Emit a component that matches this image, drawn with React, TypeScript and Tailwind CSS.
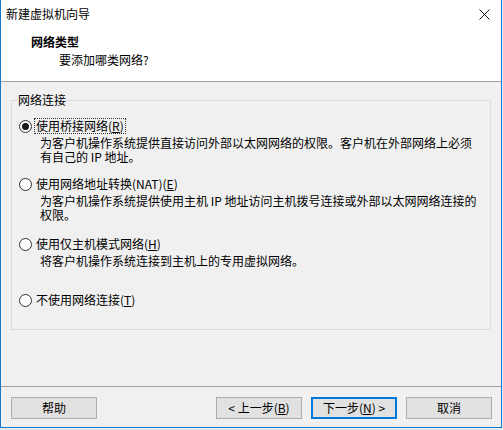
import React from "react";

const font = { fontFamily: '"Noto Sans CJK SC", "Noto Sans", sans-serif' };

function Radio({ checked }: { checked?: boolean }) {
  return (
    <span className="w-[13px] h-[13px] rounded-full border border-[#333333] bg-white flex items-center justify-center shrink-0">
      {checked && <span className="w-[7px] h-[7px] rounded-full bg-[#1a1a1a]" />}
    </span>
  );
}

function Option({
  label,
  keyChar,
  checked,
  lines,
  className,
}: {
  label: string;
  keyChar: string;
  checked?: boolean;
  lines: string[];
  className: string;
}) {
  return (
    <div className={className}>
      <div className="flex items-center h-[14px]">
        <Radio checked={checked} />
        <span
          className={
            "ml-[3px] px-[1px] leading-[14px] " +
            (checked ? "outline outline-1 outline-dotted outline-[#333]" : "")
          }
        >
          {label}(<span className="underline">{keyChar}</span>)
        </span>
      </div>
      {lines.length > 0 && (
        <div className="ml-[21px] mt-[3px] leading-[14px]">
          {lines.map((l, i) => (
            <div key={i}>{l}</div>
          ))}
        </div>
      )}
    </div>
  );
}

function Btn({ children, focused }: { children: React.ReactNode; focused?: boolean }) {
  return (
    <button
      className={
        "w-[86px] h-[22px] bg-[#e1e1e1] text-[12px] leading-none text-black flex items-center justify-center " +
        (focused ? "border-2 border-[#0078d7]" : "border border-[#adadad]")
      }
    >
      {children}
    </button>
  );
}

export default function App() {
  return (
    <div className="w-[503px] h-[430px] bg-[#e8ecf0] text-[12px] text-black" style={font}>
      <div className="w-[502px] h-[428px] border-l border-r border-b border-[#1979ca] bg-[#f0f0f0] flex flex-col">
        <div className="bg-white h-[81px] flex flex-col">
          <div className="h-[28px] flex items-center justify-between pl-[5px] pr-[11px]">
            <span className="leading-[14px]">新建虚拟机向导</span>
            <svg width="11" height="11" viewBox="0 0 11 11">
              <path d="M0.5 0.5 L10.5 10.5 M10.5 0.5 L0.5 10.5" stroke="#111" strokeWidth="1" />
            </svg>
          </div>
          <div className="pl-[30px] mt-[7px] font-bold leading-[14px]">网络类型</div>
          <div className="pl-[58px] mt-[4px] leading-[14px]">要添加哪类网络?</div>
        </div>
        <div className="h-px bg-[#a0a0a0]" />
        <div className="flex-1 px-[10px]">
          <fieldset className="mt-[11px] w-[480px] h-[237px] border border-[#dcdcdc] px-[6px]">
            <legend className="leading-[14px] px-0">网络连接</legend>
            <Option
              className="mt-[12px] ml-[1px]"
              label="使用桥接网络"
              keyChar="R"
              checked
              lines={[
                "为客户机操作系统提供直接访问外部以太网网络的权限。客户机在外部网络上必须",
                "有自己的 IP 地址。",
              ]}
            />
            <Option
              className="mt-[13px] ml-[1px]"
              label="使用网络地址转换(NAT)"
              keyChar="E"
              lines={[
                "为客户机操作系统提供使用主机 IP 地址访问主机拨号连接或外部以太网网络连接的",
                "权限。",
              ]}
            />
            <Option
              className="mt-[15px] ml-[1px]"
              label="使用仅主机模式网络"
              keyChar="H"
              lines={["将客户机操作系统连接到主机上的专用虚拟网络。"]}
            />
            <Option className="mt-[25px] ml-[1px]" label="不使用网络连接" keyChar="T" lines={[]} />
          </fieldset>
        </div>
        <div className="h-px bg-[#a0a0a0]" />
        <div className="h-[40px] flex items-start pt-[10px] pl-[10px]">
          <Btn>帮助</Btn>
          <div className="ml-[119px] flex gap-[9px]">
            <Btn>
              &lt; 上一步(<span className="underline">B</span>)
            </Btn>
            <Btn focused>
              下一步(<span className="underline">N</span>) &gt;
            </Btn>
            <Btn>取消</Btn>
          </div>
        </div>
      </div>
    </div>
  );
}
